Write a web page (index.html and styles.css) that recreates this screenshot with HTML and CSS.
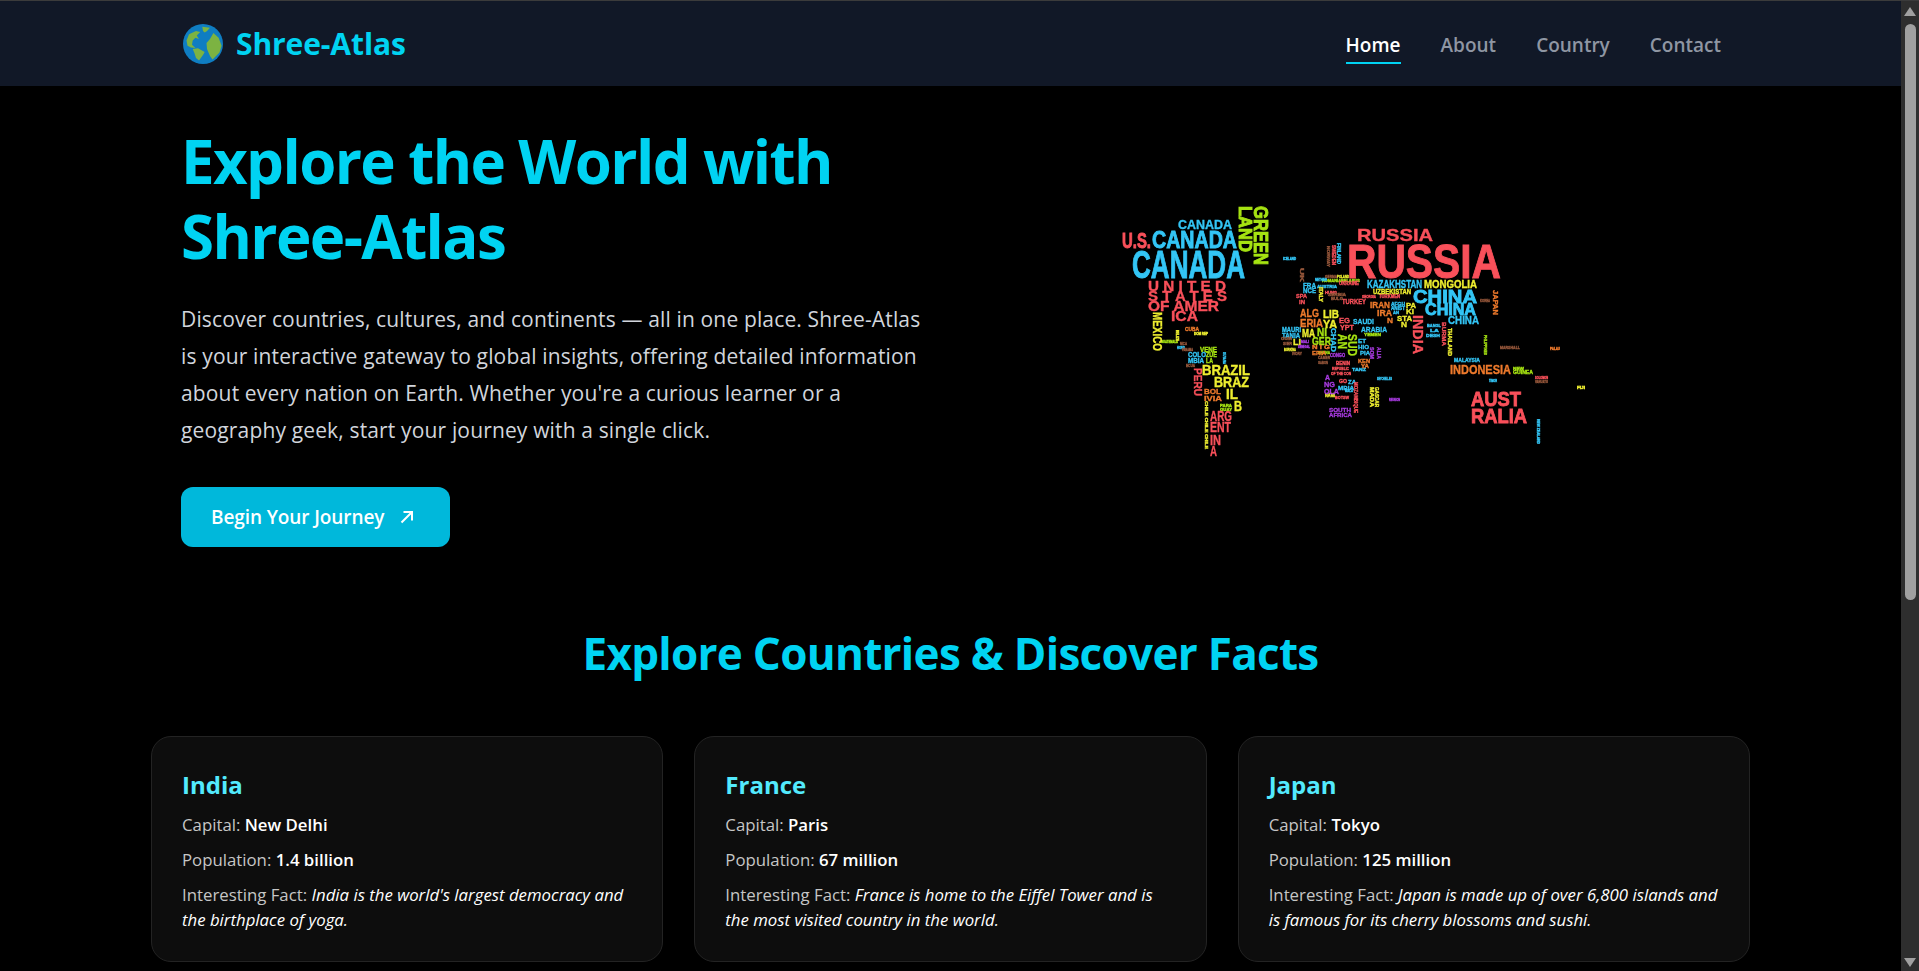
FILE: index.html
```html
<!DOCTYPE html>
<html lang="en">

<head>
  <meta charset="UTF-8">
  <meta name="viewport" content="width=device-width, initial-scale=1.0">
  <title>Shree-Atlas</title>

  <link rel="stylesheet" href="styles.css">
</head>

<body>
  <div class="page">
    <!-- Top navigation -->
    <header class="topbar">
      <a class="brand" href="#">
        <svg class="globe" viewBox="0 0 40 40" aria-hidden="true">
          <circle cx="20" cy="20" r="20" fill="#0f7dc2" />
          <path fill="#7cb342" d="M3.500 16.500 6 10.300 13 7l4.200 1-3.400 3.400 2.100 3.500-3.500-1.100-2.700 2.700-.7 4.200 3.400 3.300-4.400-.5-3.500-1.700z" />
          <path fill="#7cb342" d="M9.700 25 15 24.200l6.700 3.800-1.700 3-4 5.600-3-2.600-1.600-5z" />
          <path fill="#7cb342" d="M19.300 2.800l7.600 1-2.800 3.100-2.400 1.700-1.700-1.700z" />
          <path fill="#7cb342" d="M30.400 8.900l5.200 4.900 3 7.900-2.100 6.900-7 6.900-2.500-3.500-3-7-.5-6 3.500-4.100z" />
        </svg>
        <span class="brand-name">Shree-Atlas</span>
      </a>
      <nav class="nav">
        <a class="nav-link active" href="#">Home</a>
        <a class="nav-link" href="#">About</a>
        <a class="nav-link" href="#">Country</a>
        <a class="nav-link" href="#">Contact</a>
      </nav>
    </header>

    <!-- Hero -->
    <section class="hero">
      <div class="hero-copy">
        <h1>Explore the World with<br>Shree-Atlas</h1>
        <p>Discover countries, cultures, and continents — all in one place. Shree-Atlas<br>is your interactive gateway to global insights, offering detailed information<br>about every nation on Earth. Whether you're a curious learner or a<br>geography geek, start your journey with a single click.</p>
        <button class="cta">Begin Your Journey
          <svg viewBox="0 0 16 16" aria-hidden="true">
            <path d="M2.500 13.500 13 3M4.500 3H13v8.500" />
          </svg>
        </button>
      </div>

      <!-- World map made of country names -->
      <svg class="word-map" viewBox="1100 190 500 280" role="img" aria-label="World map made of country names">
        <g class="w-lime">
          <text class="big" transform="translate(1254 207) rotate(90)" font-size="19.500" textLength="59" lengthAdjust="spacingAndGlyphs">GREEN</text>
          <text class="big" transform="translate(1239 207) rotate(90)" font-size="18.500" textLength="46" lengthAdjust="spacingAndGlyphs">LAND</text>
          <text x="1200" y="352.500" font-size="6.500" textLength="17" lengthAdjust="spacingAndGlyphs">VENE</text>
          <text x="1206" y="358" font-size="6.500" textLength="11" lengthAdjust="spacingAndGlyphs">ZUE</text>
          <text x="1206" y="364" font-size="6.500" textLength="7" lengthAdjust="spacingAndGlyphs">LA</text>
          <text x="1317" y="337" font-size="10" textLength="10" lengthAdjust="spacingAndGlyphs">NI</text>
          <text x="1312" y="345.500" font-size="10" textLength="19" lengthAdjust="spacingAndGlyphs">GER</text>
          <text transform="translate(1348 335) rotate(90)" font-size="13" textLength="22" lengthAdjust="spacingAndGlyphs">SUD</text>
          <text transform="translate(1338 335) rotate(90)" font-size="12" textLength="15" lengthAdjust="spacingAndGlyphs">AN</text>
          <text x="1364" y="337" font-size="4" textLength="17" lengthAdjust="spacingAndGlyphs">YEMEN</text>
          <text x="1513" y="375" font-size="4.500" textLength="20" lengthAdjust="spacingAndGlyphs">GUINEA</text>
          <text x="1513" y="371" font-size="4" textLength="11" lengthAdjust="spacingAndGlyphs">NEW</text>
          <text transform="translate(1484 336) rotate(90)" font-size="4" textLength="20" lengthAdjust="spacingAndGlyphs">PHILIPPINES</text>
          <text x="1220" y="408" font-size="3.500" textLength="12" lengthAdjust="spacingAndGlyphs">PARA</text>
          <text x="1220" y="412" font-size="3.500" textLength="12" lengthAdjust="spacingAndGlyphs">GUAY</text>
          <text x="1161" y="344" font-size="3" textLength="17" lengthAdjust="spacingAndGlyphs">GUATEMALA</text>
          <text x="1322" y="283" font-size="4" textLength="19" lengthAdjust="spacingAndGlyphs">ROMANIA</text>
          <text x="1341" y="283" font-size="4" textLength="19" lengthAdjust="spacingAndGlyphs">BELARUS</text>
          <text x="1318" y="355" font-size="4" textLength="12" lengthAdjust="spacingAndGlyphs">GHANA</text>
        </g>
        <g class="w-blue">
          <text x="1178" y="230" font-size="12.500" textLength="54" lengthAdjust="spacingAndGlyphs">CANADA</text>
          <text class="big" x="1152" y="249" font-size="23" textLength="85" lengthAdjust="spacingAndGlyphs">CANADA</text>
          <text class="big" x="1132" y="279" font-size="38.500" textLength="113" lengthAdjust="spacingAndGlyphs">CANADA</text>
          <text x="1188" y="358" font-size="6.500" textLength="18" lengthAdjust="spacingAndGlyphs">COLO</text>
          <text x="1188" y="364" font-size="6.500" textLength="16" lengthAdjust="spacingAndGlyphs">MBIA</text>
          <text x="1367" y="289" font-size="10" textLength="55" lengthAdjust="spacingAndGlyphs">KAZAKHSTAN</text>
          <text class="big" x="1413" y="304" font-size="19" textLength="64" lengthAdjust="spacingAndGlyphs">CHINA</text>
          <text class="big" x="1425" y="316" font-size="16" textLength="51" lengthAdjust="spacingAndGlyphs">CHINA</text>
          <text x="1448" y="325" font-size="10" textLength="31" lengthAdjust="spacingAndGlyphs">CHINA</text>
          <text x="1454" y="363" font-size="5" textLength="26" lengthAdjust="spacingAndGlyphs">MALAYSIA</text>
          <text x="1353" y="325" font-size="8" textLength="21" lengthAdjust="spacingAndGlyphs">SAUDI</text>
          <text x="1361" y="332.500" font-size="8" textLength="26" lengthAdjust="spacingAndGlyphs">ARABIA</text>
          <text x="1282" y="333" font-size="6.500" textLength="19" lengthAdjust="spacingAndGlyphs">MAURI</text>
          <text x="1282" y="338.500" font-size="6.500" textLength="18" lengthAdjust="spacingAndGlyphs">TANIA</text>
          <text transform="translate(1331 329) rotate(90)" font-size="8" textLength="24" lengthAdjust="spacingAndGlyphs">CHAD</text>
          <text x="1303" y="288.500" font-size="7" textLength="13" lengthAdjust="spacingAndGlyphs">FRA</text>
          <text x="1303" y="294" font-size="7" textLength="13" lengthAdjust="spacingAndGlyphs">NCE</text>
          <text transform="translate(1337 244) rotate(90)" font-size="5" textLength="21" lengthAdjust="spacingAndGlyphs">FINLAND</text>
          <text x="1283" y="261" font-size="3" textLength="13" lengthAdjust="spacingAndGlyphs">ICELAND</text>
          <text x="1358" y="344" font-size="6" textLength="8" lengthAdjust="spacingAndGlyphs">ET</text>
          <text x="1358" y="350" font-size="6" textLength="11" lengthAdjust="spacingAndGlyphs">HIO</text>
          <text x="1360" y="356" font-size="6" textLength="10" lengthAdjust="spacingAndGlyphs">PIA</text>
          <text x="1348" y="385" font-size="6" textLength="8" lengthAdjust="spacingAndGlyphs">ZA</text>
          <text x="1338" y="391" font-size="6" textLength="16" lengthAdjust="spacingAndGlyphs">MBIA</text>
          <text x="1352" y="372" font-size="4" textLength="14" lengthAdjust="spacingAndGlyphs">TANZ</text>
          <text x="1427" y="328" font-size="4" textLength="14" lengthAdjust="spacingAndGlyphs">BANGL</text>
          <text x="1430" y="333" font-size="4" textLength="9" lengthAdjust="spacingAndGlyphs">LA</text>
          <text x="1426" y="338" font-size="4" textLength="14" lengthAdjust="spacingAndGlyphs">DESH</text>
          <text x="1377" y="381" font-size="3" textLength="15" lengthAdjust="spacingAndGlyphs">SEYCHELLES</text>
          <text x="1489" y="383" font-size="3" textLength="8" lengthAdjust="spacingAndGlyphs">TIMOR</text>
          <text transform="translate(1537 420) rotate(90)" font-size="3.500" textLength="25" lengthAdjust="spacingAndGlyphs">NEW ZEALAND</text>
          <text x="1391" y="307" font-size="4.500" textLength="14" lengthAdjust="spacingAndGlyphs">AFGH</text>
          <text x="1391" y="311" font-size="4.500" textLength="14" lengthAdjust="spacingAndGlyphs">ANIST</text>
          <text x="1393" y="315" font-size="4" textLength="6" lengthAdjust="spacingAndGlyphs">AN</text>
          <text x="1177" y="350" font-size="3.500" textLength="8" lengthAdjust="spacingAndGlyphs">HOND</text>
          <text transform="translate(1223 353) rotate(90)" font-size="3.500" textLength="12" lengthAdjust="spacingAndGlyphs">GUYANA</text>
          <text x="1315" y="282" font-size="3.500" textLength="12" lengthAdjust="spacingAndGlyphs">NETHER</text>
          <text x="1317" y="289" font-size="4" textLength="20" lengthAdjust="spacingAndGlyphs">AUSTRIA</text>
          <text x="1345" y="393" font-size="3.500" textLength="8" lengthAdjust="spacingAndGlyphs">MALA</text>
        </g>
        <g class="w-red">
          <text class="big" x="1122" y="249" font-size="22" textLength="29" lengthAdjust="spacingAndGlyphs">U.S.</text>
          <text x="1148" y="292" font-size="14" textLength="78" lengthAdjust="spacingAndGlyphs">U N I T E D</text>
          <text x="1148" y="302" font-size="14" textLength="79" lengthAdjust="spacingAndGlyphs">S T A T E S</text>
          <text x="1148" y="312" font-size="14" textLength="71" lengthAdjust="spacingAndGlyphs">OF AMER</text>
          <text x="1171" y="322" font-size="14" textLength="27" lengthAdjust="spacingAndGlyphs">ICA</text>
          <text transform="translate(1194 369) rotate(90)" font-size="10" textLength="28" lengthAdjust="spacingAndGlyphs">PERU</text>
          <text x="1210" y="421.500" font-size="14" textLength="22" lengthAdjust="spacingAndGlyphs">ARG</text>
          <text x="1210" y="433" font-size="14" textLength="21" lengthAdjust="spacingAndGlyphs">ENT</text>
          <text x="1210" y="445.500" font-size="14" textLength="11" lengthAdjust="spacingAndGlyphs">IN</text>
          <text x="1210" y="457" font-size="14" textLength="7" lengthAdjust="spacingAndGlyphs">A</text>
          <text x="1357" y="242" font-size="17" textLength="76" lengthAdjust="spacingAndGlyphs">RUSSIA</text>
          <text class="big" x="1347" y="279" font-size="47.500" textLength="154" lengthAdjust="spacingAndGlyphs">RUSSIA</text>
          <text x="1342" y="305" font-size="7" textLength="24" lengthAdjust="spacingAndGlyphs">TURKEY</text>
          <text x="1379" y="299" font-size="4.500" textLength="21" lengthAdjust="spacingAndGlyphs">TURKMEN</text>
          <text transform="translate(1413 316) rotate(90)" font-size="15" textLength="39" lengthAdjust="spacingAndGlyphs">INDIA</text>
          <text transform="translate(1442 323) rotate(90)" font-size="6" textLength="24" lengthAdjust="spacingAndGlyphs">BURMA</text>
          <text class="big" x="1471" y="406.500" font-size="21" textLength="50" lengthAdjust="spacingAndGlyphs">AUST</text>
          <text class="big" x="1471" y="424" font-size="21" textLength="56" lengthAdjust="spacingAndGlyphs">RALIA</text>
          <text x="1339" y="324" font-size="8" textLength="11" lengthAdjust="spacingAndGlyphs">EG</text>
          <text x="1340" y="331" font-size="8" textLength="14" lengthAdjust="spacingAndGlyphs">YPT</text>
          <text x="1296" y="299" font-size="6" textLength="11" lengthAdjust="spacingAndGlyphs">SPA</text>
          <text x="1299" y="305" font-size="6" textLength="6" lengthAdjust="spacingAndGlyphs">IN</text>
          <text transform="translate(1332 246) rotate(90)" font-size="4.500" textLength="20" lengthAdjust="spacingAndGlyphs">SWEDEN</text>
          <text x="1336" y="366" font-size="4.500" textLength="14" lengthAdjust="spacingAndGlyphs">BENIN</text>
          <text x="1332" y="371" font-size="4" textLength="17" lengthAdjust="spacingAndGlyphs">REPUBLIC</text>
          <text x="1331" y="376" font-size="4" textLength="20" lengthAdjust="spacingAndGlyphs">OF THE CON</text>
          <text x="1339" y="384" font-size="4.500" textLength="8" lengthAdjust="spacingAndGlyphs">GO</text>
          <text transform="translate(1354 383) rotate(90)" font-size="5" textLength="31" lengthAdjust="spacingAndGlyphs">MOZAMBIQUE</text>
          <text x="1535" y="380" font-size="3" textLength="13" lengthAdjust="spacingAndGlyphs">SOLOMON</text>
          <text x="1339" y="286" font-size="4.500" textLength="20" lengthAdjust="spacingAndGlyphs">UKRAINE</text>
          <text x="1335" y="400" font-size="4" textLength="14" lengthAdjust="spacingAndGlyphs">BOTSW</text>
          <text x="1362" y="299" font-size="3.500" textLength="14" lengthAdjust="spacingAndGlyphs">GEORGIA</text>
          <text x="1325" y="295" font-size="4" textLength="12" lengthAdjust="spacingAndGlyphs">HUNG</text>
        </g>
        <g class="w-yellow">
          <text transform="translate(1153 313) rotate(90)" font-size="12" textLength="39" lengthAdjust="spacingAndGlyphs">MEXICO</text>
          <text x="1202" y="375.500" font-size="14" textLength="48" lengthAdjust="spacingAndGlyphs">BRAZIL</text>
          <text x="1214" y="388" font-size="14" textLength="35" lengthAdjust="spacingAndGlyphs">BRAZ</text>
          <text x="1226" y="400" font-size="14" textLength="12" lengthAdjust="spacingAndGlyphs">IL</text>
          <text x="1234" y="412" font-size="14" textLength="8" lengthAdjust="spacingAndGlyphs">B</text>
          <text x="1424" y="289" font-size="10" textLength="53" lengthAdjust="spacingAndGlyphs">MONGOLIA</text>
          <text x="1373" y="295" font-size="7.500" textLength="38" lengthAdjust="spacingAndGlyphs">UZBEKISTAN</text>
          <text x="1406" y="309" font-size="8" textLength="10" lengthAdjust="spacingAndGlyphs">PA</text>
          <text x="1406" y="315" font-size="8" textLength="8" lengthAdjust="spacingAndGlyphs">KI</text>
          <text x="1397" y="322" font-size="8" textLength="15" lengthAdjust="spacingAndGlyphs">STA</text>
          <text x="1401" y="328" font-size="8" textLength="6" lengthAdjust="spacingAndGlyphs">N</text>
          <text transform="translate(1448 329) rotate(90)" font-size="5" textLength="28" lengthAdjust="spacingAndGlyphs">THAILAND</text>
          <text x="1323" y="319" font-size="11" textLength="16" lengthAdjust="spacingAndGlyphs">LIB</text>
          <text x="1323" y="329" font-size="11" textLength="14" lengthAdjust="spacingAndGlyphs">YA</text>
          <text x="1302" y="338" font-size="10" textLength="13" lengthAdjust="spacingAndGlyphs">MA</text>
          <text x="1293" y="346" font-size="9" textLength="8" lengthAdjust="spacingAndGlyphs">LI</text>
          <text transform="translate(1319 288) rotate(90)" font-size="4.500" textLength="15" lengthAdjust="spacingAndGlyphs">ITALY</text>
          <text x="1337" y="279" font-size="4" textLength="12" lengthAdjust="spacingAndGlyphs">POLAND</text>
          <text transform="translate(1370 388) rotate(90)" font-size="4.500" textLength="20" lengthAdjust="spacingAndGlyphs">MADA</text>
          <text transform="translate(1375 388) rotate(90)" font-size="4.500" textLength="20" lengthAdjust="spacingAndGlyphs">GASCAR</text>
          <text x="1325" y="398" font-size="4.500" textLength="10" lengthAdjust="spacingAndGlyphs">NAMI</text>
          <text x="1577" y="390" font-size="3" textLength="8" lengthAdjust="spacingAndGlyphs">FIJI</text>
          <text transform="translate(1205 402) rotate(90)" font-size="4" textLength="48" lengthAdjust="spacingAndGlyphs">CHILE CHILE CHILE</text>
          <text x="1194" y="336" font-size="3" textLength="14" lengthAdjust="spacingAndGlyphs">DOM REP</text>
          <text transform="translate(1176 331) rotate(90)" font-size="3" textLength="11" lengthAdjust="spacingAndGlyphs">BELIZE</text>
          <text x="1284" y="352" font-size="4" textLength="12" lengthAdjust="spacingAndGlyphs">BURKINA</text>
        </g>
        <g class="w-orange">
          <text x="1185" y="332" font-size="5" textLength="14" lengthAdjust="spacingAndGlyphs">CUBA</text>
          <text x="1204" y="394.500" font-size="8" textLength="17" lengthAdjust="spacingAndGlyphs">BOL</text>
          <text x="1204" y="402" font-size="8" textLength="18" lengthAdjust="spacingAndGlyphs">IVIA</text>
          <text transform="translate(1493 291) rotate(90)" font-size="7.500" textLength="25" lengthAdjust="spacingAndGlyphs">JAPAN</text>
          <text x="1370" y="309" font-size="9" textLength="20" lengthAdjust="spacingAndGlyphs">IRAN</text>
          <text x="1377" y="317" font-size="8.500" textLength="15" lengthAdjust="spacingAndGlyphs">IRA</text>
          <text x="1387" y="324" font-size="8" textLength="6" lengthAdjust="spacingAndGlyphs">N</text>
          <text x="1450" y="375" font-size="12.500" textLength="61" lengthAdjust="spacingAndGlyphs">INDONESIA</text>
          <text x="1300" y="318" font-size="11" textLength="19" lengthAdjust="spacingAndGlyphs">ALG</text>
          <text x="1300" y="327.500" font-size="11" textLength="23" lengthAdjust="spacingAndGlyphs">ERIA</text>
          <text x="1312" y="350" font-size="6" textLength="18" lengthAdjust="spacingAndGlyphs">N I G</text>
          <text x="1312" y="356" font-size="6" textLength="14" lengthAdjust="spacingAndGlyphs">ERIA</text>
          <text x="1358" y="364" font-size="6" textLength="12" lengthAdjust="spacingAndGlyphs">KEN</text>
          <text x="1361" y="369" font-size="6" textLength="8" lengthAdjust="spacingAndGlyphs">YA</text>
          <text x="1550" y="351" font-size="3" textLength="10" lengthAdjust="spacingAndGlyphs">PALAU</text>
        </g>
        <g class="w-purple">
          <text x="1325" y="381" font-size="7.500" textLength="5" lengthAdjust="spacingAndGlyphs">A</text>
          <text x="1324" y="388" font-size="7.500" textLength="11" lengthAdjust="spacingAndGlyphs">NG</text>
          <text x="1324" y="395" font-size="7.500" textLength="15" lengthAdjust="spacingAndGlyphs">OLA</text>
          <text x="1329" y="413" font-size="6" textLength="22" lengthAdjust="spacingAndGlyphs">SOUTH</text>
          <text x="1329" y="418" font-size="6" textLength="23" lengthAdjust="spacingAndGlyphs">AFRICA</text>
          <text transform="translate(1370 348) rotate(90)" font-size="5" textLength="12" lengthAdjust="spacingAndGlyphs">SOM</text>
          <text transform="translate(1377 348) rotate(90)" font-size="5" textLength="12" lengthAdjust="spacingAndGlyphs">ALIA</text>
          <text x="1301" y="344" font-size="3.500" textLength="8" lengthAdjust="spacingAndGlyphs">MALI</text>
          <text x="1298" y="349" font-size="3" textLength="12" lengthAdjust="spacingAndGlyphs">SENEGAL</text>
          <text x="1330" y="358" font-size="4.500" textLength="15" lengthAdjust="spacingAndGlyphs">CONGO</text>
          <text x="1389" y="402" font-size="3" textLength="11" lengthAdjust="spacingAndGlyphs">REUNION</text>
        </g>
        <g class="w-brown">
          <text transform="translate(1300 269) rotate(90)" font-size="5" textLength="14" lengthAdjust="spacingAndGlyphs">UK</text>
          <text transform="translate(1327 247) rotate(90)" font-size="4" textLength="21" lengthAdjust="spacingAndGlyphs">NORWAY</text>
          <text x="1325" y="279" font-size="3.500" textLength="12" lengthAdjust="spacingAndGlyphs">GERMA</text>
          <text x="1328" y="297" font-size="4" textLength="18" lengthAdjust="spacingAndGlyphs">SERBIA</text>
          <text x="1331" y="301" font-size="4" textLength="12" lengthAdjust="spacingAndGlyphs">BULG</text>
          <text x="1180" y="346" font-size="3.500" textLength="7" lengthAdjust="spacingAndGlyphs">NICA</text>
          <text x="1182" y="352" font-size="3" textLength="11" lengthAdjust="spacingAndGlyphs">PANAMA</text>
          <text x="1186" y="368" font-size="3.500" textLength="9" lengthAdjust="spacingAndGlyphs">ECUA</text>
          <text x="1281" y="341" font-size="4" textLength="11" lengthAdjust="spacingAndGlyphs">GUIN</text>
          <text x="1283" y="346" font-size="4" textLength="9" lengthAdjust="spacingAndGlyphs">SIER</text>
          <text x="1292" y="356" font-size="4" textLength="10" lengthAdjust="spacingAndGlyphs">IVORY</text>
          <text x="1318" y="360" font-size="4" textLength="12" lengthAdjust="spacingAndGlyphs">CAMER</text>
          <text x="1318" y="365" font-size="4" textLength="10" lengthAdjust="spacingAndGlyphs">GABON</text>
          <text x="1500" y="350" font-size="3.500" textLength="20" lengthAdjust="spacingAndGlyphs">MARSHALL</text>
          <text x="1480" y="303" font-size="3.500" textLength="10" lengthAdjust="spacingAndGlyphs">KOREA</text>
          <text x="1535" y="384" font-size="3" textLength="13" lengthAdjust="spacingAndGlyphs">VANUATU</text>
        </g>
      </svg>
    </section>

    <!-- Country facts -->
    <section class="facts">
      <h2>Explore Countries &amp; Discover Facts</h2>
      <div class="card-grid">
        <article class="card">
          <h3>India</h3>
          <p>Capital: <b>New Delhi</b></p>
          <p>Population: <b>1.4 billion</b></p>
          <p>Interesting Fact: <i>India is the world's largest democracy and the birthplace of yoga.</i></p>
        </article>
        <article class="card">
          <h3>France</h3>
          <p>Capital: <b>Paris</b></p>
          <p>Population: <b>67 million</b></p>
          <p>Interesting Fact: <i>France is home to the Eiffel Tower and is the most visited country in the world.</i></p>
        </article>
        <article class="card">
          <h3>Japan</h3>
          <p>Capital: <b>Tokyo</b></p>
          <p>Population: <b>125 million</b></p>
          <p>Interesting Fact: <i>Japan is made up of over 6,800 islands and is famous for its cherry blossoms and sushi.</i></p>
        </article>
      </div>
    </section>
  </div>

  <!-- Window scrollbar -->
  <div class="scrollbar" aria-hidden="true">
    <span class="arrow-up"></span>
    <span class="thumb"></span>
    <span class="arrow-down"></span>
  </div>
</body>

</html>
```

FILE: styles.css
```css
* {
  box-sizing: border-box;
}

html,
body {
  height: 971px;
  overflow: hidden;
}

body {
  display: flex;
  margin: 0;
  border-top: 1px solid #3b3b3b;
  background-color: #000;
  font-family: "Open Sans", "Noto Sans", sans-serif;
}

a {
  text-decoration: none;
}

.page {
  flex: 1;
  min-width: 0;
  overflow: hidden;
}

/* Styling for the top navigation */
.topbar {
  display: flex;
  align-items: center;
  justify-content: space-between;
  height: 85px;
  padding: 0 180px 0 183px;
  background-color: #111827;
}

.brand {
  display: flex;
  align-items: center;
  gap: 13px;
}

.globe {
  width: 40px;
  height: 40px;
}

.brand-name {
  color: #00d3f2;
  font-size: 30px;
  font-weight: 700;
  letter-spacing: -0.1px;
}

.nav {
  display: flex;
  gap: 40px;
}

.nav-link {
  padding: 10px 0 4px;
  border-bottom: 2px solid transparent;
  color: #8f96a3;
  font-size: 19px;
  font-weight: 600;
  line-height: 25px;
}

.nav-link.active {
  border-bottom-color: #00d3f2;
  color: #fff;
}

/* Styling for the hero */
.hero {
  display: flex;
  align-items: flex-start;
  padding: 38px 0 0 181px;
}

.hero-copy {
  flex: none;
  width: 919px;
}

.hero h1 {
  margin: 0 0 27px;
  color: #00d3f2;
  font-size: 60px;
  font-weight: 700;
  line-height: 75px;
  letter-spacing: -1.6px;
}

.hero p {
  margin: 0 0 38px;
  color: #d1d5dc;
  font-size: 21px;
  line-height: 37px;
  letter-spacing: 0.15px;
}

.cta {
  display: flex;
  align-items: center;
  gap: 15px;
  height: 60px;
  padding: 0 35px 0 30px;
  border: none;
  border-radius: 12px;
  background-color: #00b8db;
  color: #fff;
  font-family: inherit;
  font-size: 19px;
  font-weight: 600;
  letter-spacing: -0.1px;
}

.cta svg {
  width: 16px;
  height: 16px;
  fill: none;
  stroke: #fff;
  stroke-width: 2;
}

.word-map {
  flex: none;
  width: 500px;
  height: 280px;
  margin-top: 65px;
  filter: blur(0.35px);
  font-family: "Liberation Sans", Arial, sans-serif;
  font-weight: 700;
  stroke-width: 0.35;
}

.word-map .big {
  stroke-width: 0.9;
}

.w-lime {
  fill: #a6e312;
  stroke: #a6e312;
}

.w-blue {
  fill: #33c5f5;
  stroke: #33c5f5;
}

.w-red {
  fill: #f9505a;
  stroke: #f9505a;
}

.w-yellow {
  fill: #eeee30;
  stroke: #eeee30;
}

.w-orange {
  fill: #ee7a2c;
  stroke: #ee7a2c;
}

.w-purple {
  fill: #a83be0;
  stroke: #a83be0;
}

.w-brown {
  fill: #94563a;
  stroke: #94563a;
}

/* Styling for the country cards */
.facts {
  padding: 0 151px;
}

.facts h2 {
  margin: 76px 0 53px;
  color: #00d3f2;
  font-size: 44px;
  font-weight: 700;
  line-height: 60px;
  letter-spacing: -0.7px;
  text-align: center;
}

.card-grid {
  display: grid;
  grid-template-columns: repeat(3, 1fr);
  gap: 31px;
}

.card {
  height: 226px;
  padding: 30px;
  border: 1px solid #232323;
  border-radius: 20px;
  background-color: #0d0d0d;
}

.card h3 {
  margin: 0 0 9px;
  color: #53eafd;
  font-size: 24px;
  font-weight: 700;
  line-height: 36px;
}

.card p {
  margin: 0 0 10px;
  color: #c6c6c6;
  font-size: 16.800px;
  line-height: 25px;
}

.card b {
  color: #fff;
  font-weight: 600;
}

.card i {
  color: #fff;
}

/* Styling for the fake window scrollbar */
.scrollbar {
  display: flex;
  flex: none;
  flex-direction: column;
  align-items: center;
  width: 18px;
  padding: 6px 0 4px;
  background-color: #2e2e2e;
}

.arrow-up,
.arrow-down {
  width: 0;
  height: 0;
  border-right: 6px solid transparent;
  border-left: 6px solid transparent;
}

.arrow-up {
  border-bottom: 9px solid #a0a0a0;
}

.arrow-down {
  margin-top: auto;
  border-top: 9px solid #a0a0a0;
}

.thumb {
  width: 11px;
  height: 576px;
  margin-top: 8px;
  border-radius: 6px;
  background-color: #a0a0a0;
}
```
